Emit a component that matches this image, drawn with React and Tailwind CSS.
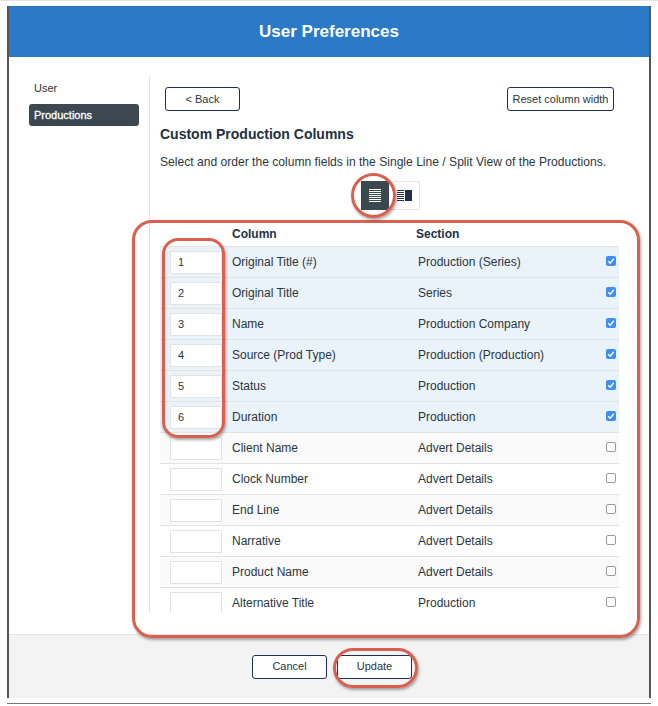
import React from 'react';

const rows = [
  { order: '1', column: 'Original Title (#)', section: 'Production (Series)', checked: true },
  { order: '2', column: 'Original Title', section: 'Series', checked: true },
  { order: '3', column: 'Name', section: 'Production Company', checked: true },
  { order: '4', column: 'Source (Prod Type)', section: 'Production (Production)', checked: true },
  { order: '5', column: 'Status', section: 'Production', checked: true },
  { order: '6', column: 'Duration', section: 'Production', checked: true },
  { order: '', column: 'Client Name', section: 'Advert Details', checked: false, shaded: true },
  { order: '', column: 'Clock Number', section: 'Advert Details', checked: false },
  { order: '', column: 'End Line', section: 'Advert Details', checked: false, shaded: true },
  { order: '', column: 'Narrative', section: 'Advert Details', checked: false },
  { order: '', column: 'Product Name', section: 'Advert Details', checked: false, shaded: true },
  { order: '', column: 'Alternative Title', section: 'Production', checked: false },
];

const rowColor = (row) => {
  if (row.checked) return 'bg-[#eaf2fa]';
  return row.shaded ? 'bg-[#fafafa]' : 'bg-white';
};

const LinesIcon = () => (
  <svg width="12" height="13" viewBox="0 0 12 13" className="text-white">
    {[0, 2, 4, 6, 8, 10, 12].map((y) => (
      <rect key={y} x="0" y={y} width="12" height="1" fill="currentColor" />
    ))}
  </svg>
);

const SplitIcon = () => (
  <svg width="15" height="11" viewBox="0 0 15 11" className="text-[#1f2f4d]">
    {[0, 2, 4, 6, 8, 10].map((y) => (
      <rect key={y} x="0" y={y} width="7" height="1" fill="currentColor" />
    ))}
    <rect x="8" y="0" width="7" height="11" fill="currentColor" />
  </svg>
);

const Checkbox = ({ checked }) =>
  checked ? (
    <span className="mb-[2px] flex h-[10px] w-[10px] items-center justify-center rounded-[2px] bg-[#3f8ff0]">
      <svg width="8" height="8" viewBox="0 0 8 8">
        <path d="M1.2 4.2 3.2 6.2 6.8 1.8" fill="none" stroke="white" strokeWidth="1.4" />
      </svg>
    </span>
  ) : (
    <span className="mb-[2px] h-[10px] w-[10px] rounded-[2px] border border-[#9a9a9a] bg-white" />
  );

const OutlineButton = ({ children, className }) => (
  <button className={`h-6 rounded-[3px] border border-[#1f2f4d] bg-white text-[11px] text-[#2b3640] ${className}`}>
    {children}
  </button>
);

const Annotation = ({ className }) => (
  <div className={`absolute border-[3px] border-[#d9604f] shadow-[1px_2px_3px_rgba(0,0,0,0.35)] ${className}`} />
);

export default function App() {
  return (
    <div className="relative h-[706px] w-[658px] overflow-hidden bg-white font-['Liberation_Sans',sans-serif] text-[#2b3640]">
      <div className="h-px bg-[#e4e4e4]" />
      <div className="ml-[7px] mt-[5px] flex h-[692px] w-[644px] flex-col border-x-2 border-x-[#555]">
        <header className="flex h-[51px] items-center justify-center bg-[#2a7ac7] text-[17px] font-bold text-white">
          User Preferences
        </header>

        <div className="flex h-[577px] pt-5">
          <aside className="w-[140px] shrink-0 pl-5">
            <div className="flex h-[22px] items-center pl-[5px] text-[11px]">User</div>
            <div className="mt-[5px] flex h-[22px] w-[110px] items-center rounded-[3px] bg-[#3c4850] pl-[5px] text-[11px] text-white [-webkit-text-stroke:0.3px_white]">
              Productions
            </div>
          </aside>

          <main className="h-[536px] w-[470px] overflow-hidden border-l border-[#e3e3e3] pl-[10px]">
            <div className="flex justify-between px-[5px] pt-[10px]">
              <OutlineButton className="w-[75px]">&lt; Back</OutlineButton>
              <OutlineButton className="w-[107px]">Reset column width</OutlineButton>
            </div>
            <h2 className="mt-[15px] text-[14px] font-bold leading-4 text-[#22303f]">Custom Production Columns</h2>
            <p className="mt-[12px] whitespace-nowrap text-[12.1px] leading-4">
              Select and order the column fields in the Single Line / Split View of the Productions.
            </p>
            <div className="ml-[201px] mt-[11px] flex h-[29px] w-[59px]">
              <div className="flex w-[28px] items-center justify-center bg-[#3c4850]">
                <LinesIcon />
              </div>
              <div className="flex w-[31px] items-center justify-center border border-l-0 border-[#e6e6e6]">
                <SplitIcon />
              </div>
            </div>

            <div className="mt-[17px] flex h-[14px] items-center text-[12px] font-bold text-[#22303f]">
              <span className="ml-[72px] w-[184px]">Column</span>
              <span>Section</span>
            </div>
            <div className="mt-[5px] w-[459px] border-t border-[#e3e3e3]">
              {rows.map((row) => (
                <div
                  key={row.column}
                  className={`flex h-[31px] items-center border-b border-[#e3e3e3] pl-[10px] text-[12px] ${rowColor(row)}`}
                >
                  <div className="flex h-[23px] w-[52px] items-center border border-[#e3e3e3] bg-white pl-[7px] text-[11px]">
                    {row.order}
                  </div>
                  <span className="ml-[10px] w-[186px]">{row.column}</span>
                  <span className="w-[188px]">{row.section}</span>
                  <Checkbox checked={row.checked} />
                </div>
              ))}
            </div>
          </main>
        </div>

        <footer className="flex h-[64px] items-center justify-center gap-[10px] border-t border-[#e3e3e3] bg-[#f3f3f3] pl-[6px]">
          <OutlineButton className="w-[75px]">Cancel</OutlineButton>
          <OutlineButton className="w-[75px]">Update</OutlineButton>
        </footer>
      </div>
      <div className="absolute bottom-[2px] left-[7px] h-px w-[644px] bg-[#777]" />

      <Annotation className="left-[132px] top-[220px] h-[418px] w-[508px] rounded-[20px]" />
      <Annotation className="left-[162px] top-[238px] h-[200px] w-[63px] rounded-[16px]" />
      <Annotation className="left-[351px] top-[173px] h-[45px] w-[45px] rounded-full" />
      <Annotation className="left-[333px] top-[648px] h-[40px] w-[85px] rounded-[20px]" />
    </div>
  );
}
